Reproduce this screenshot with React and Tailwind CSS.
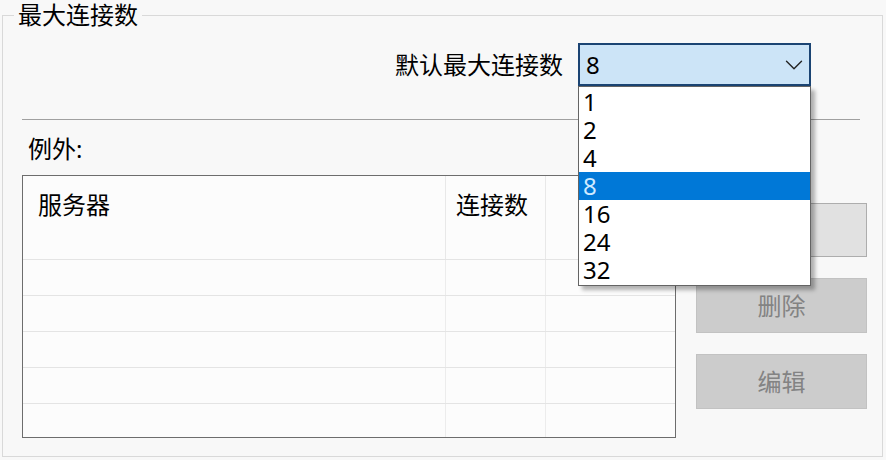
import { ChevronDown } from 'lucide-react'

const FONT = { fontFamily: '"Noto Sans", "Noto Sans CJK SC", sans-serif' }

const OPTIONS = ['1', '2', '4', '8', '16', '24', '32']
const ROWS = [0, 1, 2, 3, 4]

function Combo() {
  return (
    <div className="relative">
      <div className="flex h-[43px] w-[233px] items-center justify-between border-2 border-[#1b4473] bg-[#cce4f7] pl-[6px]">
        <span className="text-[24px] leading-none text-black">8</span>
        <ChevronDown className="h-[30px] w-[30px] text-[#222]" strokeWidth={1.1} />
      </div>
      <ul className="absolute left-0 top-full z-10 w-[233px] border border-[#646464] bg-white py-px shadow-[4px_4px_4px_rgba(0,0,0,0.3)]">
        {OPTIONS.map((o) => (
          <li
            key={o}
            className={
              o === '8'
                ? 'flex h-[28px] items-center bg-[#0078d7] pl-[4px] text-[24px] leading-none text-[#cfeaff]'
                : 'flex h-[28px] items-center pl-[4px] text-[24px] leading-none text-black'
            }
          >
            {o}
          </li>
        ))}
      </ul>
    </div>
  )
}

function Table() {
  return (
    <div className="h-[263px] w-[654px] overflow-hidden border border-[#6d6d6d] bg-[#fcfcfc]">
      <div className="flex h-[84px] border-b border-[#e4e4e4]">
        <div className="w-[423px] border-r border-[#e8e8e8] pl-[15px] pt-[14px] text-[24px] leading-[30px]">服务器</div>
        <div className="w-[100px] border-r border-[#e8e8e8] pl-[10px] pt-[14px] text-[24px] leading-[30px]">连接数</div>
        <div className="flex-1" />
      </div>
      {ROWS.map((r) => (
        <div key={r} className="flex h-[36px] border-b border-[#e4e4e4]">
          <div className="w-[423px] border-r border-[#ececec]" />
          <div className="w-[100px] border-r border-[#ececec]" />
          <div className="flex-1" />
        </div>
      ))}
    </div>
  )
}

function Btn({ children, active }) {
  return (
    <button
      className={
        active
          ? 'h-[54px] w-[171px] border border-[#adadad] bg-[#e1e1e1] text-[24px] text-black'
          : 'h-[55px] w-[171px] border border-[#c2c2c2] bg-[#cccccc] text-[24px] text-[#838383]'
      }
    >
      {children}
    </button>
  )
}

export default function App() {
  return (
    <div className="h-[460px] w-[886px] bg-[#f8f8f8] pl-[2px] pr-[3px] text-black" style={FONT}>
      <fieldset className="h-[457px] border border-[#d9d9d9]">
        <legend className="ml-[11px] px-[4px] text-[24px] leading-[30px]">最大连接数</legend>

        <div className="mt-[13px] flex items-center justify-end pr-[71px]">
          <span className="mr-[15px] text-[24px] leading-[30px]">默认最大连接数</span>
          <Combo />
        </div>

        <div className="ml-[19px] mr-[22px] mt-[33px] h-px bg-[#a0a0a0]" />

        <p className="ml-[25px] mt-[14px] text-[24px] leading-[30px]">例外:</p>

        <div className="ml-[19px] mt-[11px] flex">
          <Table />
          <div className="ml-[20px] flex flex-col gap-[21px] pt-[28px]">
            <Btn active>添加</Btn>
            <Btn>删除</Btn>
            <Btn>编辑</Btn>
          </div>
        </div>
      </fieldset>
    </div>
  )
}
